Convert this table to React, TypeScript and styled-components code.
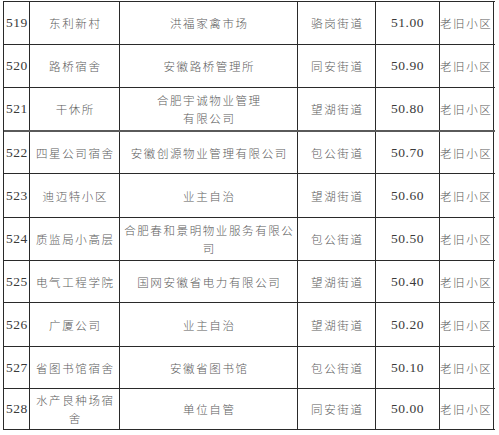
import { FC } from "react";
import styled, { createGlobalStyle } from "styled-components";

const GlobalStyle = createGlobalStyle`
  html, body {
    margin: 0;
    padding: 0;
    background: #fff;
  }
`;

const Page = styled.div`
  width: 499px;
  height: 435px;
  padding: 1px 0 0 3px;
  box-sizing: border-box;
  background: #fff;
`;

const Table = styled.div`
  width: 491px;
  border-left: 1px solid #2a2a2a;
  border-top: 1px solid #2a2a2a;
`;

const Row = styled.div<{ $h: number; $thick?: boolean }>`
  display: grid;
  grid-template-columns: 26px 90px 178px 78px 64px 54px;
  height: ${(p) => p.$h}px;
  box-sizing: border-box;
  border-bottom: ${(p) => (p.$thick ? "2px solid #5a5a5a" : "1px solid #2a2a2a")};
`;

const Cell = styled.div<{ $num?: boolean; $align?: "left" | "center" }>`
  display: flex;
  align-items: center;
  justify-content: ${(p) => (p.$align === "left" ? "flex-start" : "center")};
  padding-left: ${(p) => (p.$num && p.$align === "left" ? "2px" : "0")};
  text-align: center;
  box-sizing: border-box;
  border-right: 1px solid #2a2a2a;
  overflow: hidden;
  white-space: nowrap;
  color: ${(p) => (p.$num ? "#3a3a3a" : "#5c5c5c")};
  font-family: ${(p) =>
    p.$num
      ? '"Liberation Serif", "Noto Sans CJK SC", serif'
      : '"Noto Sans CJK SC", "Noto Sans", sans-serif'};
  font-size: ${(p) => (p.$num ? "13.5px" : "11.5px")};
  font-weight: ${(p) => (p.$num ? 400 : 300)};
  letter-spacing: ${(p) => (p.$num ? "0.5px" : "1.6px")};
  line-height: 18px;
`;

const Lines = styled.span`
  display: block;
  margin-right: -1.6px;
`;

interface Item {
  id: string;
  name: string[];
  company: string[];
  street: string;
  score: string;
  h: number;
  thick?: boolean;
}

const items: Item[] = [
  { id: "519", name: ["东利新村"], company: ["洪福家禽市场"], street: "骆岗街道", score: "51.00", h: 43 },
  { id: "520", name: ["路桥宿舍"], company: ["安徽路桥管理所"], street: "同安街道", score: "50.90", h: 43 },
  { id: "521", name: ["干休所"], company: ["合肥宇诚物业管理", "有限公司"], street: "望湖街道", score: "50.80", h: 44, thick: true },
  { id: "522", name: ["四星公司宿舍"], company: ["安徽创源物业管理有限公司"], street: "包公街道", score: "50.70", h: 42 },
  { id: "523", name: ["迪迈特小区"], company: ["业主自治"], street: "望湖街道", score: "50.60", h: 44 },
  { id: "524", name: ["质监局小高层"], company: ["合肥春和景明物业服务有限公", "司"], street: "包公街道", score: "50.50", h: 43 },
  { id: "525", name: ["电气工程学院"], company: ["国网安徽省电力有限公司"], street: "望湖街道", score: "50.40", h: 42 },
  { id: "526", name: ["广厦公司"], company: ["业主自治"], street: "望湖街道", score: "50.20", h: 44 },
  { id: "527", name: ["省图书馆宿舍"], company: ["安徽省图书馆"], street: "包公街道", score: "50.10", h: 42 },
  { id: "528", name: ["水产良种场宿", "舍"], company: ["单位自管"], street: "同安街道", score: "50.00", h: 41 },
];

const MultiLine: FC<{ lines: string[] }> = ({ lines }) => (
  <Lines>
    {lines.map((l) => (
      <div key={l}>{l}</div>
    ))}
  </Lines>
);

const App: FC = () => {
  return (
    <>
      <GlobalStyle />
      <Page>
        <Table>
          {items.map((item) => (
            <Row key={item.id} $h={item.h} $thick={item.thick}>
              <Cell $num $align="left">
                {item.id}
              </Cell>
              <Cell>
                <MultiLine lines={item.name} />
              </Cell>
              <Cell>
                <MultiLine lines={item.company} />
              </Cell>
              <Cell>
                <MultiLine lines={[item.street]} />
              </Cell>
              <Cell $num>{item.score}</Cell>
              <Cell $align="left">老旧小区</Cell>
            </Row>
          ))}
        </Table>
      </Page>
    </>
  );
};

export default App;
